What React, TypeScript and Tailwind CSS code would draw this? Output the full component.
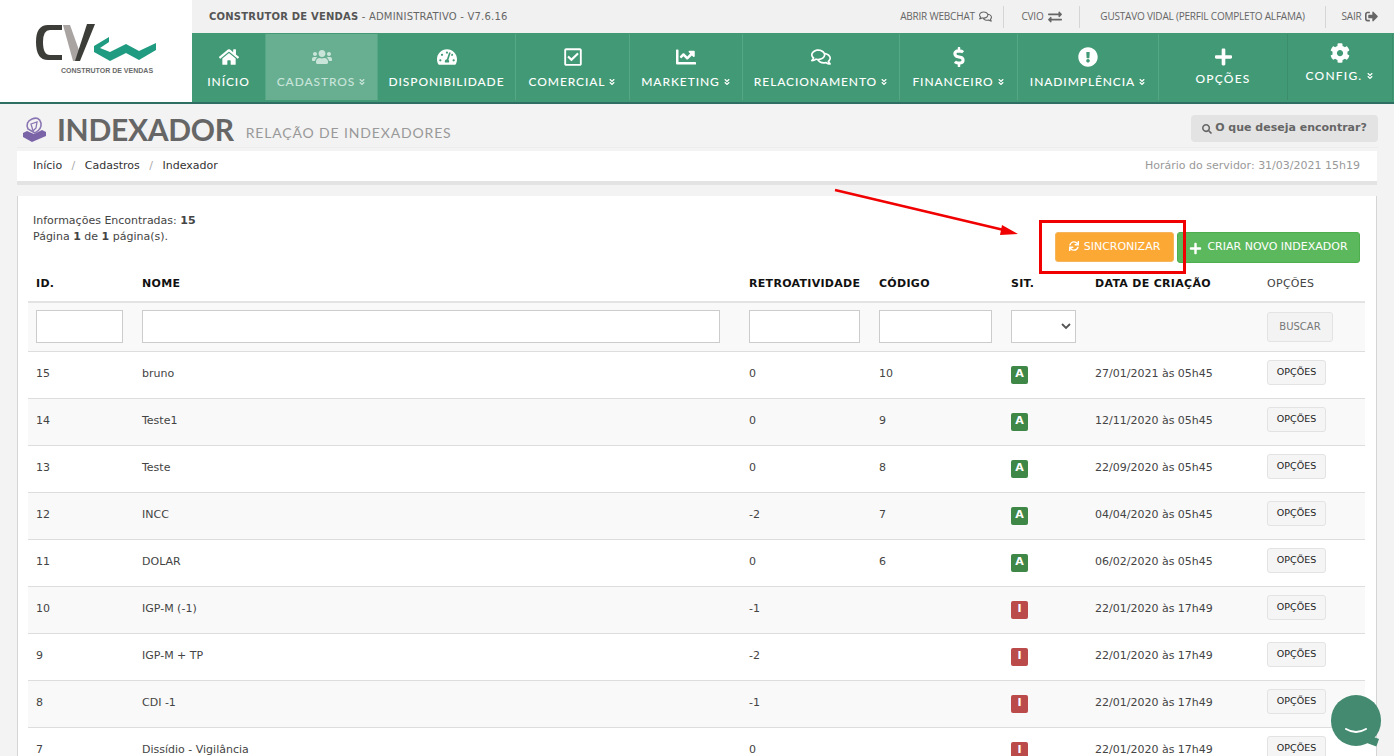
import React from "react";
import { FaHome, FaUsers, FaTachometerAlt, FaRegCheckSquare, FaChartLine, FaRegComments, FaDollarSign, FaExclamationCircle, FaPlus, FaCog, FaAngleDoubleDown, FaExchangeAlt, FaSignOutAlt, FaSearch, FaSync } from "react-icons/fa";

const navItems = [
  { label: "INÍCIO", Icon: FaHome, w: "w-[74px]", caret: false },
  { label: "CADASTROS", Icon: FaUsers, w: "w-[112px]", caret: true, active: true },
  { label: "DISPONIBILIDADE", Icon: FaTachometerAlt, w: "w-[138px]", caret: false },
  { label: "COMERCIAL", Icon: FaRegCheckSquare, w: "w-[114px]", caret: true },
  { label: "MARKETING", Icon: FaChartLine, w: "w-[113px]", caret: true },
  { label: "RELACIONAMENTO", Icon: FaRegComments, w: "w-[157px]", caret: true },
  { label: "FINANCEIRO", Icon: FaDollarSign, w: "w-[118px]", caret: true },
  { label: "INADIMPLÊNCIA", Icon: FaExclamationCircle, w: "w-[141px]", caret: true },
];

const rows = [
  ["15", "bruno", "0", "10", "A", "27/01/2021 às 05h45"],
  ["14", "Teste1", "0", "9", "A", "12/11/2020 às 05h45"],
  ["13", "Teste", "0", "8", "A", "22/09/2020 às 05h45"],
  ["12", "INCC", "-2", "7", "A", "04/04/2020 às 05h45"],
  ["11", "DOLAR", "0", "6", "A", "06/02/2020 às 05h45"],
  ["10", "IGP-M (-1)", "-1", "", "I", "22/01/2020 às 17h49"],
  ["9", "IGP-M + TP", "-2", "", "I", "22/01/2020 às 17h49"],
  ["8", "CDI -1", "-1", "", "I", "22/01/2020 às 17h49"],
  ["7", "Dissídio - Vigilância", "0", "", "I", "22/01/2020 às 17h49"],
];

const th = "px-2 text-left font-bold text-[11px] tracking-[0.3px] text-[#111] h-[35px] align-middle";
const inputCls = "block h-[33px] border border-[#ccc] bg-white";

function Logo() {
  return (
    <div className="relative w-[192px] h-[102px] bg-white shrink-0">
      <svg className="absolute left-[34px] top-[22px]" width="124" height="42" viewBox="0 0 124 42">
        <path d="M28 3 H14 Q2 3 2 20 Q2 38 14 38 H28 V33 H16 Q9 33 9 20 Q9 8 16 8 H28 Z" fill="#3c3c38" />
        <path d="M29 3 H36 L46 31 L42 39 H39 Z" fill="#a9a4a2" />
        <path d="M61 2 H53 L41 39 H46 Z" fill="#3c3c38" />
        <path d="M60 24 L75 15 V20 L66 26 L76 30 L92 22 L105 29 L122 21 V28 L105 38 L92 31 L76 39 L60 30 Z" fill="#1e9b80" />
      </svg>
      <div className="absolute left-[61px] top-[66px] text-[7px] leading-[9px] font-bold text-[#6a6a6a] whitespace-nowrap font-['Liberation_Sans',sans-serif]">CONSTRUTOR DE VENDAS</div>
    </div>
  );
}

function TopLink({ children, border = true, w }: { children: React.ReactNode; border?: boolean; w: string }) {
  return (
    <div className={`flex items-center justify-center gap-1 h-[22px] text-[10px] tracking-[-0.2px] text-[#666] font-['Open_Sans',sans-serif] ${w} ${border ? "border-r border-[#d5d5d5]" : ""}`}>
      {children}
    </div>
  );
}

export default function App() {
  return (
    <div className="h-[756px] w-[1394px] overflow-hidden relative bg-[#f3f3f3] font-['DejaVu_Sans',sans-serif] text-[11px] text-[#444]">
      <header className="flex h-[104px] border-b-[2px] border-[#2f6f63]">
        <Logo />
        <div className="flex-1 flex flex-col">
          <div className="h-[33px] bg-[#f1f1f1] flex items-center justify-between pl-[17px] pr-[0px]">
            <div className="text-[10px] tracking-[0.2px] text-[#666] font-['DejaVu_Sans',sans-serif] whitespace-nowrap">
              <b className="text-[#555]">CONSTRUTOR DE VENDAS</b> - ADMINISTRATIVO - V7.6.16
            </div>
            <div className="flex items-center">
              <TopLink w="w-[115px]">ABRIR WEBCHAT <FaRegComments className="text-[13px]" /></TopLink>
              <TopLink w="w-[76px]">CVIO <FaExchangeAlt className="text-[14px]" /></TopLink>
              <TopLink w="w-[246px]">GUSTAVO VIDAL (PERFIL COMPLETO ALFAMA)</TopLink>
              <TopLink w="w-[68px]" border={false}>SAIR <FaSignOutAlt className="text-[13px]" /></TopLink>
            </div>
          </div>
          <nav className="flex h-[69px] bg-[#419a75] font-['Lato',sans-serif] text-white">
            {navItems.map((n) => (
              <div key={n.label} className={`${n.w} mt-[1px] h-[66px] flex flex-col items-center justify-start border-r border-[#55a786] ${n.active ? "bg-[#68af92] text-[#c9e5da]" : ""}`}>
                <n.Icon className="text-[20px] mt-[13px] h-[20px]" />
                <div className="mt-[8px] flex items-center gap-[3px] text-[12px] font-medium leading-[14px] tracking-[0.9px] whitespace-nowrap">
                  {n.label}
                  {n.caret && <FaAngleDoubleDown className="text-[8px]" />}
                </div>
              </div>
            ))}
            <div className="w-[129px] mt-[1px] h-[66px] flex flex-col items-center border-r border-[#3b8d6b]">
              <FaPlus className="text-[17px] mt-[13px] h-[20px]" />
              <div className="mt-[5px] text-[12px] font-medium leading-[14px] tracking-[1.2px]">OPÇÕES</div>
            </div>
            <div className="w-[105px] mt-[1px] h-[66px] flex flex-col items-center border-r border-[#3b8d6b]">
              <FaCog className="text-[20px] mt-[9px] h-[20px]" />
              <div className="mt-[6px] flex items-center gap-[4px] text-[12px] font-medium leading-[14px] tracking-[1.2px]">CONFIG. <FaAngleDoubleDown className="text-[8px]" /></div>
            </div>
          </nav>
        </div>
      </header>

      <main className="pl-[17px] pr-[17px]">
        <div className="relative flex items-start justify-between h-[44px] border-b border-[#ececec] -mr-[1px]">
          <div className="flex items-center pl-[5px] pt-[10px]">
            <svg width="25" height="26" viewBox="0 0 25 26">
              <path d="M1 17 L5 15 L12 18 L20 14 L24 16 V20 L10 26 L1 21 Z" fill="#7b63a8" />
              <path d="M6 13 Q3 6 10 3 Q17 0 19 7 Q20 13 13 17 Z" fill="none" stroke="#8a75b3" strokeWidth="1.6" />
              <path d="M9 8 L15 6 L14 12 L11 15 Z" fill="none" stroke="#8a75b3" strokeWidth="1.3" />
            </svg>
            <h1 className="ml-[10px] text-[30px] leading-[30px] font-['Lato',sans-serif] font-bold tracking-[-0.3px] text-[#666]">INDEXADOR</h1>
            <span className="ml-[12px] mt-[8px] text-[14px] leading-[18px] font-['Lato',sans-serif] tracking-[0.85px] text-[#999]">RELAÇÃO DE INDEXADORES</span>
          </div>
          <div className="mt-[11px] mr-[0px] h-[27px] w-[187px] rounded-[4px] bg-[#e3e3e3] flex items-center justify-center gap-[3px] text-[11px] font-bold text-[#666]">
            <FaSearch className="text-[10px]" /> O que deseja encontrar?
          </div>
        </div>

        <div className="mt-[3px] h-[34px] bg-white border-b-[4px] border-[#e3e3e3] flex items-center justify-between pl-[16px] pr-[17px]">
          <div className="text-[11px] text-[#333]">
            Início <span className="mx-[6px] text-[#aaa]">/</span> Cadastros <span className="mx-[6px] text-[#aaa]">/</span> Indexador
          </div>
          <div className="text-[11px] text-[#999]">Horário do servidor: 31/03/2021 15h19</div>
        </div>

        <section className="mt-[11px] bg-white border-l border-r border-[#d5d5d5] pl-[10px] pr-[11px] h-[600px]">
          <div className="flex justify-between h-[71px]">
            <div className="pt-[17px] pl-[5px] text-[11px] leading-[16px] text-[#444]">
              <div>Informações Encontradas: <b>15</b></div>
              <div>Página <b>1</b> de <b>1</b> página(s).</div>
            </div>
            <div className="flex items-start gap-[3px] pt-[36px] pr-[5px]">
              <button className="h-[30px] w-[119px] rounded-[3px] bg-[#fba834] border border-[#f5b55c] text-white text-[11px] flex items-center justify-center gap-[5px]">
                <FaSync className="text-[10px] -mt-[2px]" /> SINCRONIZAR
              </button>
              <button className="h-[31px] w-[183px] rounded-[3px] bg-[#5cb85c] border border-[#4cae4c] text-white text-[11px] flex items-center justify-center gap-[5px]">
                <FaPlus className="text-[13px] mt-[2px]" /> CRIAR NOVO INDEXADOR
              </button>
            </div>
          </div>

          <table className="w-[1337px] table-fixed border-collapse">
            <colgroup>
              <col className="w-[106px]" />
              <col className="w-[607px]" />
              <col className="w-[130px]" />
              <col className="w-[132px]" />
              <col className="w-[84px]" />
              <col className="w-[172px]" />
              <col className="w-[106px]" />
            </colgroup>
            <thead>
              <tr className="border-b-[2px] border-[#e3e3e3]">
                <th className={th}>ID.</th>
                <th className={th}>NOME</th>
                <th className={th}>RETROATIVIDADE</th>
                <th className={th}>CÓDIGO</th>
                <th className={th}>SIT.</th>
                <th className={th}>DATA DE CRIAÇÃO</th>
                <th className={`${th} font-normal text-[#444]`}>OPÇÕES</th>
              </tr>
            </thead>
            <tbody>
              <tr className="h-[49px] bg-[#f9f9f9] border-b border-[#ddd]">
                <td className="px-2"><div className={`${inputCls} w-[87px]`} /></td>
                <td className="px-2"><div className={`${inputCls} w-[578px]`} /></td>
                <td className="px-2"><div className={`${inputCls} w-[111px]`} /></td>
                <td className="px-2"><div className={`${inputCls} w-[113px]`} /></td>
                <td className="px-2">
                  <div className={`${inputCls} w-[65px] flex items-center justify-end pr-[4px]`}>
                    <svg width="10" height="7" viewBox="0 0 10 7"><path d="M1 1 L5 5 L9 1" fill="none" stroke="#555" strokeWidth="1.8" /></svg>
                  </div>
                </td>
                <td />
                <td className="px-2">
                  <div className="w-[66px] h-[30px] rounded-[3px] bg-[#f3f3f3] border border-[#e3e3e3] flex items-center justify-center text-[10px] text-[#777]">BUSCAR</div>
                </td>
              </tr>
              {rows.map((r, i) => (
                <tr key={r[0]} className={`h-[47px] border-b border-[#ddd] ${i % 2 ? "bg-[#f9f9f9]" : "bg-white"}`}>
                  <td className="px-2 text-[#444]">{r[0]}</td>
                  <td className="px-2 text-[#444]">{r[1]}</td>
                  <td className="px-2 text-[#444]">{r[2]}</td>
                  <td className="px-2 text-[#444]">{r[3]}</td>
                  <td className="px-2">
                    <span className={`w-[17px] h-[18px] rounded-[2px] flex items-center justify-center text-white text-[11px] font-bold ${r[4] === "A" ? "bg-[#3f8747]" : "bg-[#bb4a4a]"}`}>{r[4]}</span>
                  </td>
                  <td className="px-2 text-[#444]">{r[5]}</td>
                  <td className="px-2">
                    <div className="w-[59px] h-[25px] -mt-[4px] rounded-[3px] bg-[#f5f5f5] border border-[#e3e3e3] flex items-center justify-center text-[9.5px] text-[#222]">OPÇÕES</div>
                  </td>
                </tr>
              ))}
            </tbody>
          </table>
        </section>
      </main>

      {/* annotation overlays */}
      <svg className="absolute left-[830px] top-[185px] pointer-events-none" width="200" height="60" viewBox="0 0 200 60">
        <line x1="5" y1="5" x2="178" y2="46" stroke="#f00000" strokeWidth="2.5" />
        <path d="M188 49 L172 40 L170 50 Z" fill="#f00000" />
      </svg>
      <div className="absolute left-[1039px] top-[220px] w-[147px] h-[54px] border-[3px] border-[#f00000] pointer-events-none" />

      {/* chat bubble */}
      <div className="absolute left-[1331px] top-[695px] w-[50px] h-[51px]">
        <div className="w-[50px] h-[51px] rounded-full bg-[#448a70]" />
        <div className="absolute right-[3px] bottom-[1px] w-[10px] h-[8px] bg-[#448a70] rotate-[20deg]" />
        <svg className="absolute left-[14px] top-[33px]" width="22" height="8" viewBox="0 0 22 8">
          <path d="M1 1 Q11 7 21 1" fill="none" stroke="#fff" strokeWidth="2" strokeLinecap="round" />
        </svg>
      </div>
    </div>
  );
}
